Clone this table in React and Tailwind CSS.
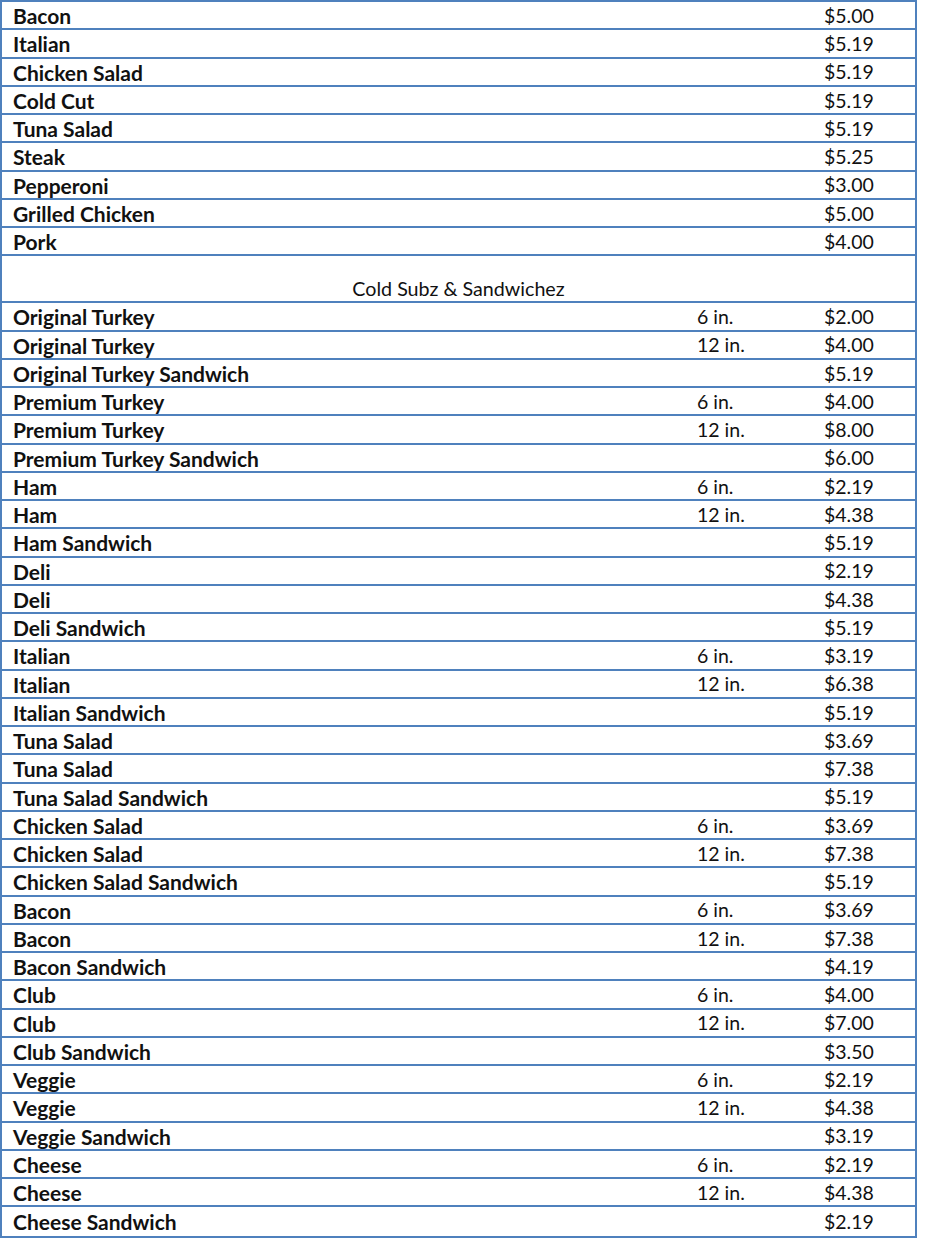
const hotItems = [
  ['Bacon', '', '$5.00'],
  ['Italian', '', '$5.19'],
  ['Chicken Salad', '', '$5.19'],
  ['Cold Cut', '', '$5.19'],
  ['Tuna Salad', '', '$5.19'],
  ['Steak', '', '$5.25'],
  ['Pepperoni', '', '$3.00'],
  ['Grilled Chicken', '', '$5.00'],
  ['Pork', '', '$4.00'],
];

const coldItems = [
  ['Original Turkey', '6 in.', '$2.00'],
  ['Original Turkey', '12 in.', '$4.00'],
  ['Original Turkey Sandwich', '', '$5.19'],
  ['Premium Turkey', '6 in.', '$4.00'],
  ['Premium Turkey', '12 in.', '$8.00'],
  ['Premium Turkey Sandwich', '', '$6.00'],
  ['Ham', '6 in.', '$2.19'],
  ['Ham', '12 in.', '$4.38'],
  ['Ham Sandwich', '', '$5.19'],
  ['Deli', '', '$2.19'],
  ['Deli', '', '$4.38'],
  ['Deli Sandwich', '', '$5.19'],
  ['Italian', '6 in.', '$3.19'],
  ['Italian', '12 in.', '$6.38'],
  ['Italian Sandwich', '', '$5.19'],
  ['Tuna Salad', '', '$3.69'],
  ['Tuna Salad', '', '$7.38'],
  ['Tuna Salad Sandwich', '', '$5.19'],
  ['Chicken Salad', '6 in.', '$3.69'],
  ['Chicken Salad', '12 in.', '$7.38'],
  ['Chicken Salad Sandwich', '', '$5.19'],
  ['Bacon', '6 in.', '$3.69'],
  ['Bacon', '12 in.', '$7.38'],
  ['Bacon Sandwich', '', '$4.19'],
  ['Club', '6 in.', '$4.00'],
  ['Club', '12 in.', '$7.00'],
  ['Club Sandwich', '', '$3.50'],
  ['Veggie', '6 in.', '$2.19'],
  ['Veggie', '12 in.', '$4.38'],
  ['Veggie Sandwich', '', '$3.19'],
  ['Cheese', '6 in.', '$2.19'],
  ['Cheese', '12 in.', '$4.38'],
  ['Cheese Sandwich', '', '$2.19'],
];

function Row({ item, last }) {
  const [name, size, price] = item;
  return (
    <div
      className={`flex h-[28.25px] items-center pt-[1px] leading-none text-[#111] ${
        last ? '' : 'border-b-2 border-[#4f81bd]'
      }`}
    >
      <span className="flex-1 pl-[11px] text-[21px] font-bold">{name}</span>
      <span className="w-[127px] text-[19.5px]">{size}</span>
      <span className="w-[91px] text-[19.5px]">{price}</span>
    </div>
  );
}

export default function App() {
  return (
    <div className="w-[944px] bg-white font-['Lato','Open_Sans',sans-serif]">
      <div className="w-[917px] border-x-2 border-t-2 border-b-2 border-[#4f81bd]">
        {hotItems.map((item, i) => (
          <Row key={`h${i}`} item={item} />
        ))}

        {/* section header */}
        <div className="flex h-[47px] items-end justify-center border-b-2 border-[#4f81bd] pb-[3px] text-[19.7px] leading-none text-[#111]">
          Cold Subz &amp; Sandwichez
        </div>

        {coldItems.map((item, i) => (
          <Row key={`c${i}`} item={item} last={i === coldItems.length - 1} />
        ))}
      </div>
    </div>
  );
}
